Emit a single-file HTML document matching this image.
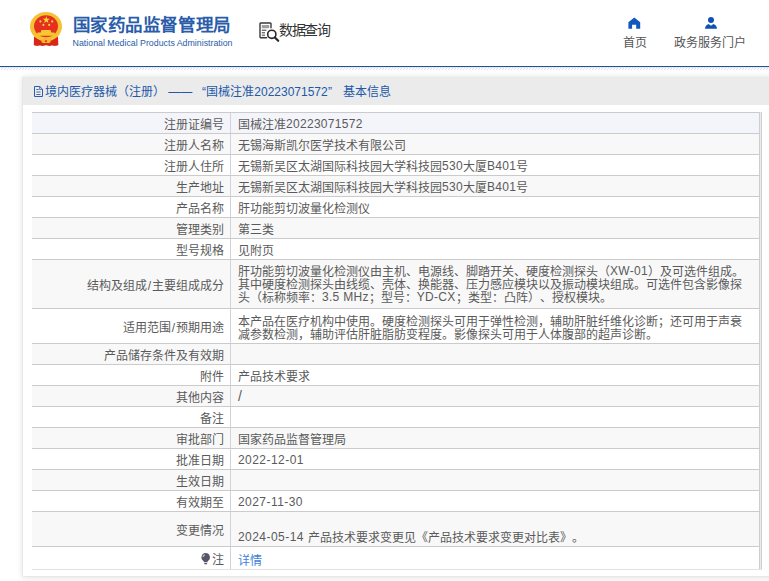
<!DOCTYPE html>
<html lang="zh-CN">
<head>
<meta charset="utf-8">
<title>国家药品监督管理局 数据查询</title>
<style>
html,body{margin:0;padding:0;}
body{width:769px;height:581px;overflow:hidden;background:#fff;position:relative;font-family:"Liberation Sans",sans-serif;font-size:12px;color:#5a5a5a;text-spacing-trim:space-all;}
.abs{position:absolute;}
#emblem{left:29px;top:11px;}
#t1{left:72.5px;top:14px;font-size:17.5px;letter-spacing:.6px;font-weight:bold;color:#2a5caa;white-space:nowrap;line-height:22px;}
#t2{left:72.6px;top:37px;font-size:8.8px;color:#2a5caa;white-space:nowrap;line-height:12px;}
#dq{left:279px;top:20px;font-size:14px;letter-spacing:-1.3px;color:#333;white-space:nowrap;line-height:20px;}
#dqi{left:258px;top:21px;}
.nav{font-size:12px;color:#555;white-space:nowrap;line-height:16px;text-align:center;}
#n1{left:605px;top:35px;width:60px;}
#n2{left:660px;top:35px;width:100px;}
#hl{left:0;top:66px;width:769px;height:1px;background:#2b5288;}
#hc{left:0;top:67px;width:769px;height:1px;background:#dcecf8;}
#hh{left:0;top:68px;width:769px;height:2px;background:repeating-linear-gradient(135deg,#d9dff2 0,#d9dff2 .7px,rgba(255,255,255,0) .7px,rgba(255,255,255,0) 2.1213px);}
#panel{left:22px;top:76px;width:760px;height:501px;border:1px solid #e8e8e8;border-top-color:#f2f1f1;border-radius:2px;box-shadow:0 1px 6px rgba(0,0,0,.11);background:#fff;box-sizing:border-box;}
#ph{left:23px;top:77px;width:746px;height:28px;background:#ebebeb;}
.pt{top:83px;color:#2158a8;font-size:12px;white-space:nowrap;line-height:18px;}
#pi{left:34px;top:86px;}
.r{position:absolute;left:32px;width:730px;border-top:1px solid #cbcbcb;box-sizing:border-box;}
.l{position:absolute;left:0;top:0;bottom:0;width:198px;border-right:1px solid #d2d2d8;box-sizing:content-box;display:flex;align-items:center;justify-content:flex-end;}
.l>span{padding-right:6px;white-space:nowrap;line-height:14px;position:relative;top:2px;}
.v{position:absolute;left:199px;top:0;bottom:0;width:528px;display:flex;align-items:center;}
.v>span{padding-left:7px;white-space:nowrap;line-height:13px;position:relative;top:2px;}
#rb{left:759px;top:112px;width:3px;height:458px;background:linear-gradient(90deg,#cdcdcd 0,#cdcdcd 1px,#ececec 1px,#ececec 2px,#cdcdcd 2px,#cdcdcd 3px);}
#bl{left:32px;top:569px;width:730px;height:1px;background:#e2e2e2;}
.lnk{color:#3f7fd9;position:relative;top:1px;}
.n{letter-spacing:.3px;position:relative;top:-1px;}
.d{letter-spacing:.45px;margin-right:.8px;}
.sl{margin:0 .9px;}
.bs{font-size:14px;position:relative;top:-1px;}
.bulb{position:absolute;left:169.2px;top:5.5px;}
</style>
</head>
<body>
<svg id="emblem" class="abs" width="34" height="36" viewBox="0 0 34 36">
 <path d="M5 25.5 L4.8 34 Q8 35.2 11 34.2 L13.5 35 Q17 33.5 20.5 35 L23 34.2 Q26 35.2 29.3 34 L29 25.5 Z" fill="#d8261b"/>
 <ellipse cx="17" cy="15.6" rx="16" ry="14.6" fill="#f5c233"/>
 <ellipse cx="17" cy="15.3" rx="12" ry="11" fill="#e4311f"/>
 <path d="M6.2 27.2 L10.6 29.6 L10.8 34.2 Q8 35 4.9 34 Z" fill="#d8261b"/>
 <path d="M27.8 27.2 L23.4 29.6 L23.2 34.2 Q26 35 29.2 34 Z" fill="#d8261b"/>
 <ellipse cx="17" cy="30" rx="4.6" ry="2.7" fill="#f3b62c"/>
 <circle cx="17" cy="30.2" r="1.1" fill="#e0401f"/>
 <path d="M11.5 33 Q17 30.8 22.5 33 L22.5 34.6 Q17 33.2 11.5 34.6 Z" fill="#d8261b"/>
 <polygon points="17.3,5.2 18.2,7.8 20.9,7.8 18.7,9.5 19.5,12.1 17.3,10.5 15.1,12.1 15.9,9.5 13.7,7.8 16.4,7.8" fill="#f8d43c"/>
 <circle cx="11.4" cy="10.4" r="1.05" fill="#f8d43c"/><circle cx="23.2" cy="10.4" r="1.05" fill="#f8d43c"/>
 <circle cx="14.4" cy="13.9" r="1.05" fill="#f8d43c"/><circle cx="20.2" cy="13.9" r="1.05" fill="#f8d43c"/>
 <path d="M12.4 19.1 h9.2 l.6 2.3 h3.2 l.9 3.3 h-18.6 l.9 -3.3 h3.2 Z" fill="#f6c634"/>
</svg>
<div id="t1" class="abs">国家药品监督管理局</div>
<div id="t2" class="abs">National Medical Products Administration</div>
<svg id="dqi" class="abs" width="24" height="24" viewBox="0 0 24 24">
 <path d="M13 6.8V2.6q0-.6-.6-.6H2.6q-.6 0-.6 .6V16.1q0 .6 .6 .6H8.6" fill="none" stroke="#3a3a3a" stroke-width="1.4" stroke-linecap="round"/>
 <path d="M3.8 5h7.4" stroke="#555" stroke-width="1.1"/><path d="M3.8 6.5h7.4" stroke="#9a9a9a" stroke-width="1.4"/>
 <path d="M3.8 9.2h4.6" stroke="#444" stroke-width="1.1"/>
 <path d="M3.8 11.7h3.2" stroke="#555" stroke-width="1.1"/><path d="M3.8 13.2h3.2" stroke="#aaa" stroke-width="1.2"/><path d="M3.8 14.6h3.2" stroke="#777" stroke-width="1"/>
 <circle cx="13.8" cy="13.3" r="4.1" fill="#fff" stroke="#2a2a2a" stroke-width="1.6"/>
 <path d="M16.9 16.5l3.3 3.3" stroke="#2a2a2a" stroke-width="2.2" stroke-linecap="round"/>
</svg>
<div id="dq" class="abs">数据查询</div>
<svg class="abs" style="left:628px;top:17px" width="13" height="12" viewBox="0 0 13 12"><path d="M6.3 .6 L12.2 5.2 V11.7 H8.2 V7.8 H4.1 V11.7 H.4 V5.2 Z" fill="#1259bd"/></svg>
<div id="n1" class="abs nav">首页</div>
<svg class="abs" style="left:705px;top:17px" width="13" height="12" viewBox="0 0 13 12"><circle cx="6" cy="3" r="3" fill="#0f51b6"/><path d="M0 11.8 Q.3 8 3.6 7 L6 8.8 L8.4 7 Q11.7 8 12 11.8 Z" fill="#0f51b6"/></svg>
<div id="n2" class="abs nav">政务服务门户</div>
<div id="hl" class="abs"></div><div id="hc" class="abs"></div><div id="hh" class="abs"></div>
<div id="panel" class="abs"></div>
<div id="ph" class="abs"></div>
<svg id="pi" class="abs" width="9" height="11" viewBox="0 0 9 11"><path d="M.5 .5h5.3l2.7 2.7v7.3h-8z" fill="none" stroke="#2a5cab" stroke-width="1"/><path d="M5.6 .7v2.7h2.7" fill="none" stroke="#2a5cab" stroke-width=".8"/><path d="M2.3 3.5h2.4M2.3 6h4.2M2.3 8.5h4.2" stroke="#3f6db5" stroke-width="1"/></svg>
<div class="abs pt" style="left:44.8px">境内医疗器械（注册）</div><div class="abs pt" style="left:168.3px">——</div><div class="abs pt" style="right:563px">“</div><div class="abs pt" style="left:206.3px">国械注准20223071572</div><div class="abs pt" style="left:328px">”</div><div class="abs pt" style="left:342.6px">基本信息</div>
<div class="r" style="top:112px;height:21px;background:#f4f5fa"><div class="l"><span>注册证编号</span></div><div class="v"><span>国械注准<span class="n">20223071572</span></span></div></div>
<div class="r" style="top:133px;height:21px;background:#f8f8f8"><div class="l"><span>注册人名称</span></div><div class="v"><span>无锡海斯凯尔医学技术有限公司</span></div></div>
<div class="r" style="top:154px;height:21px;background:#ffffff"><div class="l"><span>注册人住所</span></div><div class="v"><span>无锡新吴区太湖国际科技园大学科技园<span class="n">530</span>大厦<span class="n">B401</span>号</span></div></div>
<div class="r" style="top:175px;height:21px;background:#f8f8f8"><div class="l"><span>生产地址</span></div><div class="v"><span>无锡新吴区太湖国际科技园大学科技园<span class="n">530</span>大厦<span class="n">B401</span>号</span></div></div>
<div class="r" style="top:196px;height:21px;background:#ffffff"><div class="l"><span>产品名称</span></div><div class="v"><span>肝功能剪切波量化检测仪</span></div></div>
<div class="r" style="top:217px;height:21px;background:#f8f8f8"><div class="l"><span>管理类别</span></div><div class="v"><span>第三类</span></div></div>
<div class="r" style="top:238px;height:21px;background:#ffffff"><div class="l"><span>型号规格</span></div><div class="v"><span>见附页</span></div></div>
<div class="r" style="top:259px;height:49px;background:#f8f8f8"><div class="l"><span>结构及组成<span class="sl">/</span>主要组成成分</span></div><div class="v"><span style="top:1px">肝功能剪切波量化检测仪由主机、电源线、脚踏开关、硬度检测探头（<span class="n">XW-01</span>）及可选件组成。<br>其中硬度检测探头由线缆、壳体、换能器、压力感应模块以及振动模块组成。可选件包含影像探<br>头（标称频率：<span class="n">3.5 MHz</span>；型号：<span class="n">YD-CX</span>；类型：凸阵）、授权模块。</span></div></div>
<div class="r" style="top:308px;height:35px;background:#ffffff"><div class="l"><span>适用范围<span class="sl">/</span>预期用途</span></div><div class="v"><span style="top:3px">本产品在医疗机构中使用。硬度检测探头可用于弹性检测，辅助肝脏纤维化诊断；还可用于声衰<br>减参数检测，辅助评估肝脏脂肪变程度。影像探头可用于人体腹部的超声诊断。</span></div></div>
<div class="r" style="top:343px;height:21px;background:#f8f8f8"><div class="l"><span>产品储存条件及有效期</span></div><div class="v"><span></span></div></div>
<div class="r" style="top:364px;height:21px;background:#ffffff"><div class="l"><span>附件</span></div><div class="v"><span>产品技术要求</span></div></div>
<div class="r" style="top:385px;height:21px;background:#f8f8f8"><div class="l"><span>其他内容</span></div><div class="v"><span><span class="bs">/</span></span></div></div>
<div class="r" style="top:406px;height:21px;background:#ffffff"><div class="l"><span>备注</span></div><div class="v"><span></span></div></div>
<div class="r" style="top:427px;height:21px;background:#f8f8f8"><div class="l"><span>审批部门</span></div><div class="v"><span>国家药品监督管理局</span></div></div>
<div class="r" style="top:448px;height:21px;background:#ffffff"><div class="l"><span>批准日期</span></div><div class="v"><span><span class="n d">2022-12-01</span></span></div></div>
<div class="r" style="top:469px;height:21px;background:#f8f8f8"><div class="l"><span>生效日期</span></div><div class="v"><span></span></div></div>
<div class="r" style="top:490px;height:21px;background:#ffffff"><div class="l"><span>有效期至</span></div><div class="v"><span><span class="n d">2027-11-30</span></span></div></div>
<div class="r" style="top:511px;height:35px;background:#f8f8f8"><div class="l"><span>变更情况</span></div><div class="v"><span style="top:3px"><br><span class="n d">2024-05-14</span> 产品技术要求变更见《产品技术要求变更对比表》。</span></div></div>
<div class="r" style="top:546px;height:23px;background:#ffffff"><div class="l"><svg class="bulb" width="10" height="12" viewBox="0 0 10 12"><path d="M4.7 .1a4.25 4.3 0 0 1 2.3 7.9q-.5 .5-.6 1.2h-3.4q-.1-.7-.6-1.2a4.25 4.3 0 0 1 2.3-7.9z" fill="#55566a"/><rect x="3.2" y="10" width="3" height="1.2" rx=".5" fill="#55566a"/><ellipse cx="2.7" cy="2.7" rx=".7" ry="1.7" fill="#c0c0cc" transform="rotate(40 2.7 2.7)"/></svg><span>注</span></div><div class="v"><span><span class="lnk">详情</span></span></div></div>
<div id="rb" class="abs"></div>
<div id="bl" class="abs"></div>
</body>
</html>
